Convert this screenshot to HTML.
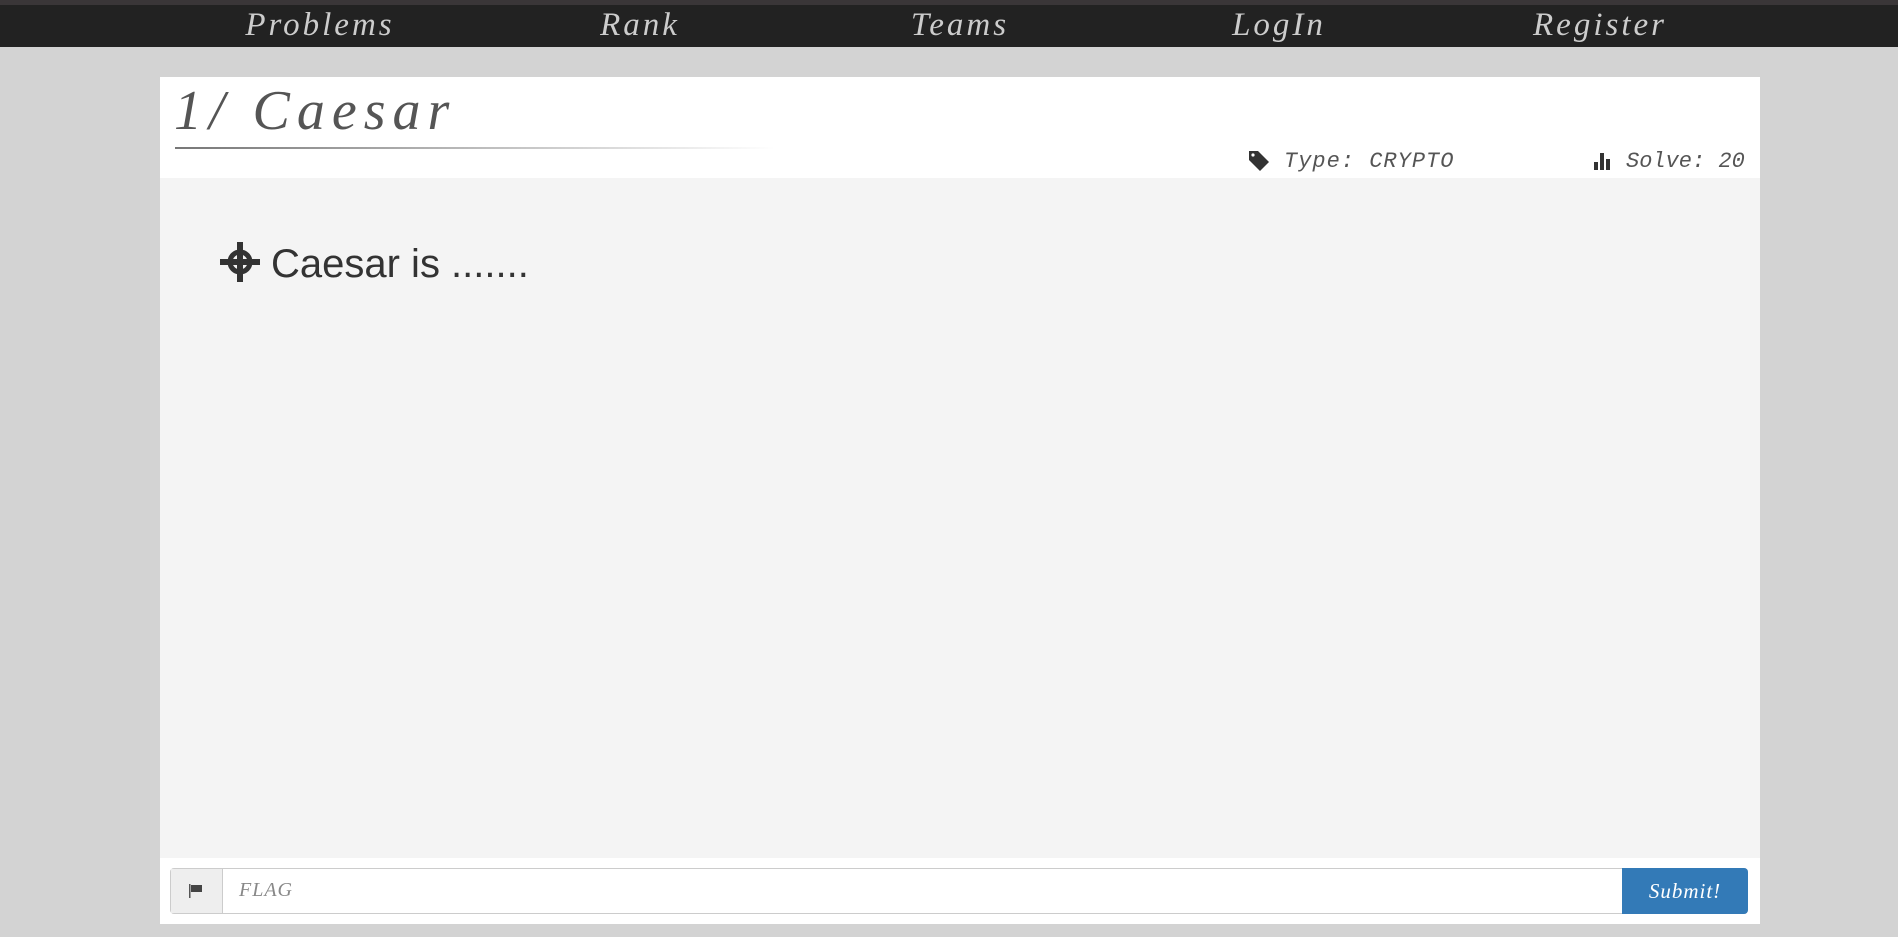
<!DOCTYPE html>
<html><head><meta charset="utf-8"><style>
body{margin:0;width:1898px;height:937px;background:#d3d3d3;position:relative;overflow:hidden;font-family:"Liberation Serif",serif}
.nav{position:absolute;left:0;top:0;width:1898px;height:47px;background:#222;border-top:5px solid #3a3638;box-sizing:border-box}
.nav span{position:absolute;top:2px;font-style:italic;font-size:33px;color:#ccc;transform:translateX(-50%);font-weight:100;letter-spacing:3px}
.panel{position:absolute;left:160px;top:77px;width:1600px;height:847px;background:#fff}
.title{position:absolute;left:14px;top:2px;font-size:56px;font-style:italic;color:#555;letter-spacing:7px;font-weight:100}
.uline{position:absolute;left:15px;top:70px;width:600px;height:2px;background:linear-gradient(90deg,#777,#fff)}
.meta{position:absolute;top:72px;font-family:"Liberation Mono",monospace;font-style:italic;font-size:22px;color:#555;letter-spacing:1px}
.content{position:absolute;left:0;top:101px;width:1600px;height:680px;background:#f4f4f4}
.q{position:absolute;left:111px;top:64px;font-family:"Liberation Sans",sans-serif;font-size:40px;color:#333}
.ig{position:absolute;left:10px;top:791px;width:1578px;height:46px;border:1px solid #ccc;border-radius:4px;box-sizing:border-box;background:#fff}
.addon{position:absolute;left:0;top:0;width:51px;height:44px;background:#eee;border-right:1px solid #ccc}
.ph{position:absolute;left:68px;top:10px;font-style:italic;font-size:20px;color:#888;letter-spacing:1px}
.btn{position:absolute;right:-1px;top:-1px;width:126px;height:46px;background:#337ab7;border-radius:0 4px 4px 0;color:#fff;font-style:italic;font-size:21px;text-align:center;line-height:46px;letter-spacing:1px}
</style></head><body>
<div class="nav">
<span style="left:320px">Problems</span><span style="left:640px">Rank</span><span style="left:960px">Teams</span><span style="left:1279px">LogIn</span><span style="left:1600px">Register</span>
</div>
<div class="panel">
<div class="title">1/ Caesar</div>
<div class="uline"></div>
<svg style="position:absolute;left:1088px;top:73px" width="22" height="22" viewBox="0 0 22 22"><path d="M1 1h9l11 11-9 9L1 10z" fill="#333"/><circle cx="5" cy="5" r="1.6" fill="#fff"/></svg>
<div class="meta" style="left:1124px">Type: CRYPTO</div>
<svg style="position:absolute;left:1433px;top:74px" width="20" height="20" viewBox="0 0 20 20"><rect x="1" y="11" width="4" height="8" fill="#333"/><rect x="7" y="2" width="4" height="17" fill="#333"/><rect x="13" y="8" width="4" height="11" fill="#333"/></svg>
<div class="meta" style="left:1466px;letter-spacing:0">Solve: 20</div>
<div class="content">
<svg style="position:absolute;left:60px;top:64px" width="40" height="40" viewBox="0 0 40 40"><circle cx="20" cy="20" r="10" fill="none" stroke="#333" stroke-width="5"/><rect x="17" y="0" width="6" height="40" fill="#333"/><rect x="0" y="17" width="40" height="6" fill="#333"/></svg>
<div class="q">Caesar is .......</div>
</div>
<div class="ig"><div class="addon"><svg style="position:absolute;left:17px;top:14px" width="16" height="16" viewBox="0 0 16 16"><rect x="1" y="1" width="1.5" height="14" fill="#555"/><path d="M3 2h11v7H3z" fill="#444"/></svg></div>
<div class="ph">FLAG</div><div class="btn">Submit!</div></div>
</div>
</body></html>
